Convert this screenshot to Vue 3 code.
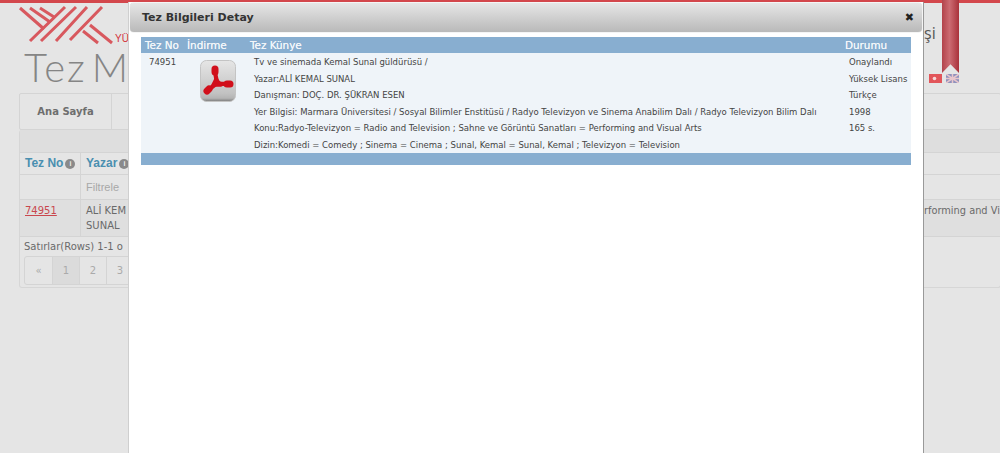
<script setup>
const lines = [
  'Tv ve sinemada Kemal Sunal güldürüsü /',
  'Yazar:ALİ KEMAL SUNAL',
  'Danışman: DOÇ. DR. ŞÜKRAN ESEN',
  'Yer Bilgisi: Marmara Üniversitesi / Sosyal Bilimler Enstitüsü / Radyo Televizyon ve Sinema Anabilim Dalı / Radyo Televizyon Bilim Dalı',
  'Konu:Radyo-Televizyon = Radio and Television ; Sahne ve Görüntü Sanatları = Performing and Visual Arts',
  'Dizin:Komedi = Comedy ; Sinema = Cinema ; Sunal, Kemal = Sunal, Kemal ; Televizyon = Television'
]
const status = ['Onaylandı', 'Yüksek Lisans', 'Türkçe', '1998', '165 s.']
const pages = ['«', '1', '2', '3']
</script>

<template>
  <div class="page">
    <div class="topbar"></div>
    <header class="head">
      <div class="brand">
        <svg class="logo" width="92" height="37" viewBox="0 0 92 37" fill="none" stroke="#d8585e" stroke-width="3">
          <path d="M0 2 L24 23 M10 2 L30 16 M20 2 L34 11" />
          <path d="M45 1 L10 35 M56 1 L21 35 M67 1 L36 35 M82 1 L50 34" />
          <path d="M70 19 L92 37 M63 25 L78 37" />
        </svg>
        <span class="yu">YÜ</span>
      </div>
      <h1>Tez M</h1>
      <span class="si">şi</span>
    </header>
    <nav class="nav"><a>Ana Sayfa</a></nav>
    <section class="panel">
      <div class="band"></div>
      <div class="row heads">
        <div class="c1">Tez No<i>i</i></div>
        <div class="c2">Yazar<i>i</i></div>
      </div>
      <div class="row filter">
        <div class="c1"></div>
        <div class="c2">Filtrele</div>
      </div>
      <div class="row data">
        <div class="c1"><a>74951</a></div>
        <div class="c2">ALİ KEM<br />SUNAL</div>
        <div class="c3">rforming and Vi</div>
      </div>
      <div class="foot">
        <p>Satırlar(Rows) 1-1 o</p>
        <div class="pager">
          <span v-for="(p, i) in pages" :key="p" :class="{ cur: i === 1 }">{{ p }}</span>
        </div>
      </div>
    </section>

    <div class="ribbon"></div>
    <div class="flags">
      <svg width="13" height="9" viewBox="0 0 13 9"><rect width="13" height="9" fill="#e2555a" /><circle cx="5.5" cy="4.5" r="1.8" fill="#f6d8d8" /></svg>
      <svg width="13" height="9" viewBox="0 0 13 9"><rect width="13" height="9" fill="#8f92bd" /><path d="M0 0L13 9M13 0L0 9M6.5 0V9M0 4.5H13" stroke="#e8c6cc" stroke-width="1.5" /></svg>
    </div>

    <div class="modal">
      <div class="mhead">
        <h3>Tez Bilgileri Detay</h3>
        <span class="x">✖</span>
      </div>
      <div class="tbl">
        <div class="thead">
          <span class="tno">Tez No</span>
          <span class="tdl">İndirme</span>
          <span class="tkn">Tez Künye</span>
          <span>Durumu</span>
        </div>
        <div class="tbody">
          <div class="tno pad">74951</div>
          <div class="tdl icon">
            <svg width="36" height="42" viewBox="0 0 36 42">
              <defs>
                <linearGradient id="pg" x1="0" y1="0" x2="0" y2="1">
                  <stop offset="0" stop-color="#e6e6e6" />
                  <stop offset=".8" stop-color="#c2c2c2" />
                  <stop offset=".92" stop-color="#b4b4b4" />
                  <stop offset="1" stop-color="#7a7a7a" />
                </linearGradient>
              </defs>
              <rect x=".5" y=".5" width="35" height="41" rx="6" fill="url(#pg)" stroke="#c4c4c4" />
              <g fill="none" stroke="#d10f1b" stroke-linecap="round" stroke-linejoin="round">
                <path d="M15 9 C14.5 15 17 19 17 23 M17 23 L7 31 M17 23 C21 25 25 23 30 24" stroke-width="4.2" />
                <path d="M15 9 L15 12 M7 31 L9 29 M27 24 L30 24" stroke-width="7" />
                <path d="M16 19 L13 25 L21 25 Z" stroke-width="3.4" fill="#d10f1b" />
              </g>
            </svg>
          </div>
          <div class="tkn">
            <div v-for="l in lines" :key="l" class="ln">{{ l }}</div>
          </div>
          <div class="tst">
            <div v-for="s in status" :key="s" class="ln">{{ s }}</div>
          </div>
        </div>
        <div class="tfoot"></div>
      </div>
    </div>
  </div>
</template>

<style>
html, body { margin: 0; background: #e5e5e5; overflow: hidden; }
</style>

<style scoped>
.page { position: relative; width: 1000px; height: 453px; overflow: hidden; background: #e5e5e5; font-family: "DejaVu Sans", sans-serif; color: #6a6a6a; }
.topbar { height: 3px; background: #d3474c; }
.head { position: relative; height: 90px; padding: 4px 0 0 20px; box-sizing: border-box; }
.brand { display: flex; align-items: flex-end; height: 36px; }
.logo { flex: none; overflow: visible; }
.yu { font: 10px "Liberation Sans", sans-serif; color: #d4343c; margin: 0 0 -1px 3px; }
h1 { margin: 1px 0 0 4px; font: 300 40px/46px Lato, "Open Sans", sans-serif; color: #858585; letter-spacing: 2px; word-spacing: -8px; white-space: nowrap; }
.si { position: absolute; left: 924px; top: 19px; font: 16px "Open Sans", sans-serif; color: #555; }
.nav { display: flex; margin: 0 -1px 0 19px; height: 37px; border: 1px solid #d4d4d4; border-radius: 2px; box-sizing: border-box; }
.nav a { width: 91px; border-right: 1px solid #d4d4d4; font: bold 10px/35px "DejaVu Sans", sans-serif; color: #6e6e6e; text-align: center; }
.panel { margin: 0 -1px 0 19px; height: 158px; border: 1px solid #d6d6d6; border-top: 0; border-radius: 3px; box-sizing: border-box; }
.band { height: 22px; background: #dedede; border-bottom: 1px solid #d4d4d4; }
.row { display: flex; border-bottom: 1px solid #d4d4d4; font: 10px "DejaVu Sans", sans-serif; box-sizing: border-box; }
.c1 { width: 50px; padding: 0 5px; border-right: 1px solid #d4d4d4; white-space: nowrap; }
.c2 { width: 350px; padding: 0 5px; white-space: nowrap; }
.c3 { margin-left: auto; width: 76px; padding-top: 3px; font-size: 9.8px; line-height: 15px; white-space: nowrap; overflow: hidden; }
.heads { height: 22px; font: bold 12px/21px "Liberation Sans", sans-serif; color: #4a8fb0; }
.heads i { display: inline-block; width: 10px; height: 10px; margin-left: 2px; background: #8a8a8a; color: #eee; border-radius: 50%; font: bold 7px/10px "Liberation Sans", sans-serif; text-align: center; vertical-align: 0; position: relative; top: -1px; }
.filter { height: 25px; color: #a8a8a8; font: 11px/24px "Liberation Sans", sans-serif; }
.data { height: 37px; background: #dfdfdf; line-height: 15px; }
.data .c1, .data .c2 { padding-top: 3px; }
.data a { color: #c9474e; text-decoration: underline; }
.foot { padding: 0 4px; font: 10px "DejaVu Sans", sans-serif; }
.foot p { margin: 0; height: 19px; line-height: 19px; white-space: nowrap; }
.pager { display: flex; height: 27px; border: 1px solid #d4d4d4; border-radius: 3px; width: max-content; }
.pager span { width: 26px; border-right: 1px solid #d4d4d4; text-align: center; line-height: 27px; color: #aaa; }
.pager span:first-child { width: 27px; }
.pager .cur { background: #dbdbdb; }
.ribbon { position: absolute; left: 942px; top: 0; width: 17px; height: 73px; background: linear-gradient(90deg, #b2434b, #cc6b72 45%, #a9323b); clip-path: polygon(0 0, 100% 0, 100% 100%, 50% 88%, 0 100%); }
.flags { position: absolute; left: 929px; top: 74px; display: flex; gap: 4px; }
.flags svg { display: block; }
.modal { position: absolute; left: 128px; top: 2px; width: 796px; height: 470px; padding-top: 1px; background: #fff; border-right: 1px solid #999; border-left: 1px solid #cfcfcf; box-sizing: border-box; }
.mhead { display: flex; justify-content: space-between; align-items: center; height: 29px; margin: 0 1px; padding: 0 8px 0 12px; border-radius: 4px; background: linear-gradient(#e6e6e6, #b9b9b9); box-shadow: 0 0 1px #999; }
h3 { margin: 0; font: bold 11px "DejaVu Sans", sans-serif; color: #333; }
.x { font-size: 11px; color: #222; }
.tbl { margin: 5px 12px 0; font-size: 8.5px; color: #444; }
.thead { display: flex; height: 16px; line-height: 16px; background: #88aed0; color: #f2f6fa; font-size: 10.4px; white-space: nowrap; text-shadow: 0 0 .6px #f2f6fa; }
.tno { width: 46px; padding-left: 4px; box-sizing: border-box; flex: none; }
.tdl { width: 63px; flex: none; }
.tkn { width: 595px; flex: none; box-sizing: border-box; }
.tbody { display: flex; height: 100px; padding-top: 1px; box-sizing: border-box; background: #eff4f9; }
.pad { padding: 0 0 0 8px; line-height: 17px; }
.icon { padding: 6px 0 0 13px; box-sizing: border-box; }
.tbody .tkn { padding-left: 4px; }
.tst { padding-left: 4px; }
.ln { height: 16.6px; line-height: 17px; white-space: nowrap; }
.tfoot { height: 12px; background: #88aed0; }
</style>
